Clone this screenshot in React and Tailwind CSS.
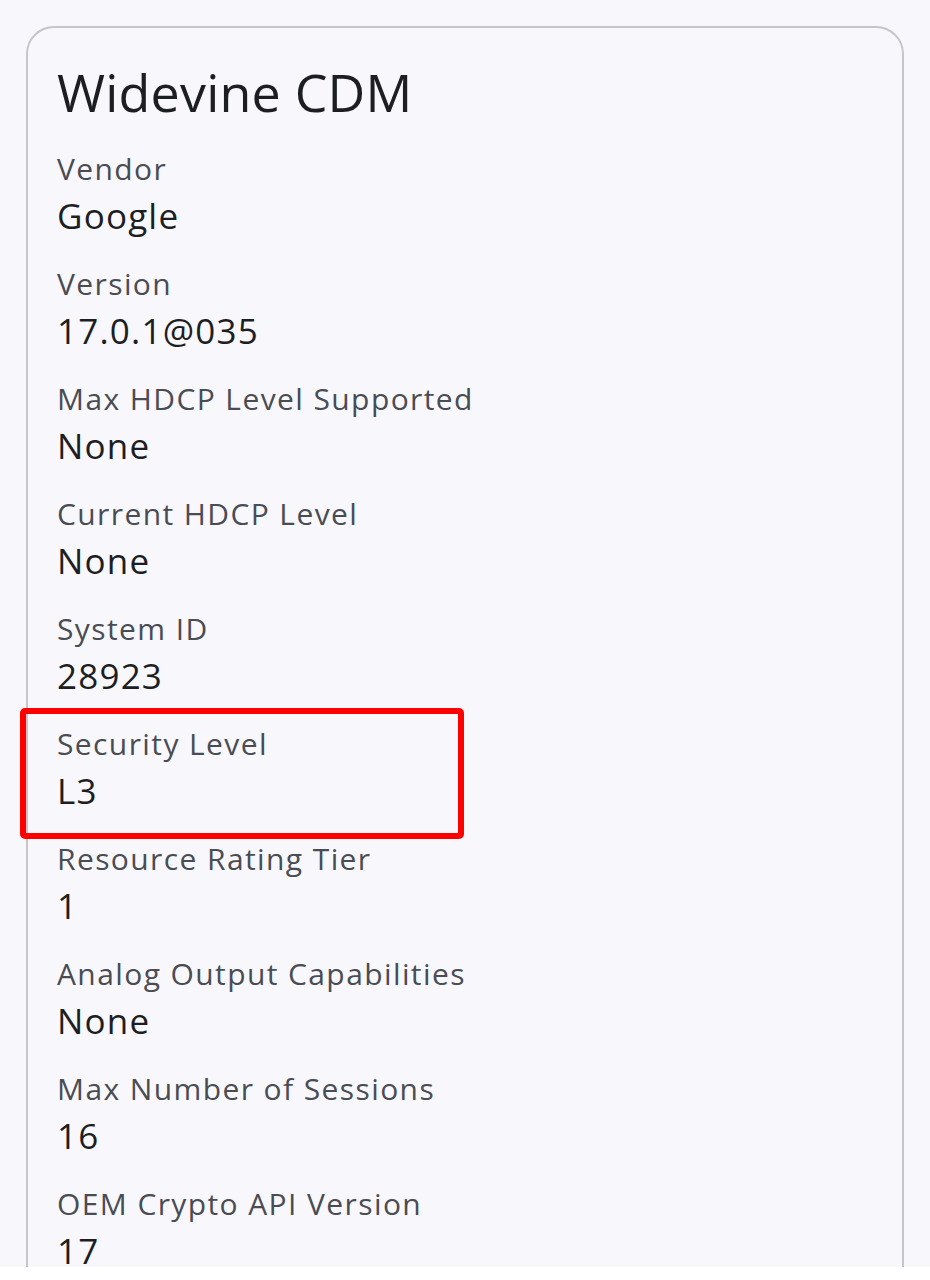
import React from "react";

const items = [
  ["Vendor", "Google"],
  ["Version", "17.0.1@035"],
  ["Max HDCP Level Supported", "None"],
  ["Current HDCP Level", "None"],
  ["System ID", "28923"],
  ["Security Level", "L3", true],
  ["Resource Rating Tier", "1"],
  ["Analog Output Capabilities", "None"],
  ["Max Number of Sessions", "16"],
  ["OEM Crypto API Version", "17"],
];

export default function App() {
  return (
    <div
      className="w-[930px] h-[1280px] overflow-hidden bg-white"
      style={{ fontFamily: '"Open Sans", "Noto Sans", sans-serif' }}
    >
      <div className="h-[1267px] overflow-hidden bg-[#f8f8fc] pt-[26px] px-[26px]">
        <div className="rounded-[28px] border-2 border-[#c6c6ca] bg-[#f8f8fc] pl-[29px] pt-[32px] h-[1400px]">
          <h1 className="text-[52px] leading-[64px] text-[#1d1e22] tracking-[0.2px]">Widevine CDM</h1>
          <div className="mt-[23px] flex flex-col gap-[21px]">
            {items.map(([label, value, hl]) => (
              <div key={label} className="relative">
                {hl && (
                  <div className="absolute top-[-14px] bottom-[-23px] left-[-37px] w-[444px] border-[6px] border-[#ff0000] rounded-[5px]" />
                )}
                <div className="text-[30px] leading-[44px] text-[#4a4c54] tracking-[1.4px] whitespace-nowrap">{label}</div>
                <div className="text-[35px] leading-[50px] text-[#1d1e22] tracking-[1.2px] whitespace-nowrap">{value}</div>
              </div>
            ))}
          </div>
        </div>
      </div>
    </div>
  );
}
